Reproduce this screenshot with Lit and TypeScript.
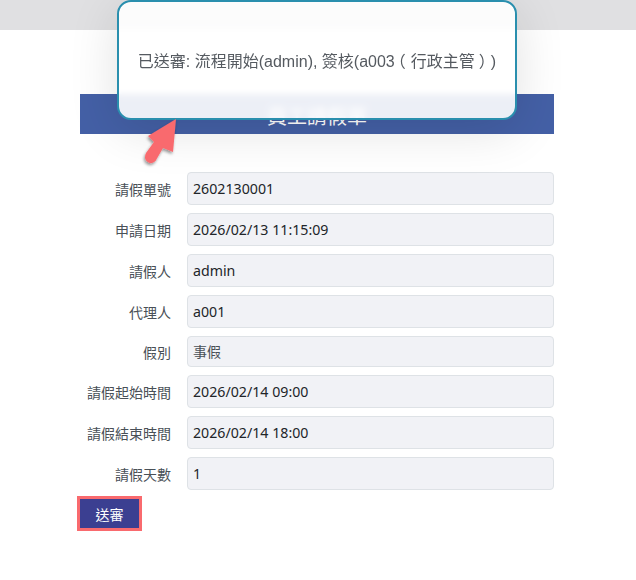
import { LitElement, html, css } from "lit";
import { customElement } from "lit/decorators.js";

const rows: [string, string, string?][] = [
  ["請假單號", "2602130001"],
  ["申請日期", "2026/02/13 11:15:09"],
  ["請假人", "admin"],
  ["代理人", "a001"],
  ["假別", "事假", "sel"],
  ["請假起始時間", "2026/02/14 09:00"],
  ["請假結束時間", "2026/02/14 18:00"],
  ["請假天數", "1"],
];

@customElement("app-root")
export class AppRoot extends LitElement {
  static styles = css`
    :host {
      display: block;
      position: relative;
      width: 636px;
      height: 580px;
      overflow: hidden;
      background: #fff;
      font-family: "Noto Sans", "Noto Sans CJK TC", sans-serif;
      color: #212529;
    }
    .top { height: 30px; background: #e0e0e2; }
    .content { padding: 64px 82px 0 80px; }
    .title {
      height: 40px;
      background: #4460a6;
      color: #fff;
      font-size: 20px;
      line-height: 46px;
      text-align: center;
      overflow: hidden;
      margin-bottom: 38px;
    }
    .form { display: flex; flex-direction: column; gap: 8px; }
    .row { display: flex; align-items: center; gap: 16px; }
    .label {
      width: 91px;
      text-align: right;
      font-size: 14px;
      color: #495057;
      white-space: nowrap;
    }
    .field {
      flex: 1;
      height: 33px;
      box-sizing: border-box;
      border: 1px solid #dee2e6;
      border-radius: 4px;
      background: #f1f2f6;
      padding: 0 5px;
      font-size: 14.2px;
      line-height: 31px;
    }
    .field.sel { height: 31px; line-height: 29px; font-size: 14px; color: #495057; }
    .btn {
      display: block;
      margin: 6px 0 0 -3px;
      width: 65px;
      height: 35px;
      box-sizing: border-box;
      border: 3px solid #f96a6e;
      background: #3b3f91;
      color: #fff;
      font: inherit;
      font-size: 14px;
      padding: 0;
    }
    .toast {
      position: absolute;
      left: 117px;
      top: 0;
      width: 400px;
      height: 120px;
      box-sizing: border-box;
      border: 2px solid #2a8fae;
      border-radius: 14px;
      background: rgba(255, 255, 255, 0.9);
      backdrop-filter: blur(3px);
      box-shadow: 0 10px 50px rgba(0, 0, 0, 0.12);
      display: flex;
      align-items: center;
      justify-content: center;
      font-family: "Liberation Sans", "Noto Sans CJK TC", sans-serif;
      font-size: 16px;
      color: #555a60;
      white-space: nowrap;
    }
    .open { font-feature-settings: "halt"; margin: 0 5px 0 3px; }
    .close { font-feature-settings: "halt"; margin: 0 4px; }
    .arrow { position: absolute; left: 140px; top: 115px; overflow: visible; }
  `;

  render() {
    return html`
      <div class="top"></div>
      <div class="content">
        <div class="title">員工請假單</div>
        <div class="form">
          ${rows.map(
            ([l, v, k]) => html`<div class="row">
              <div class="label">${l}</div>
              <div class="field ${k ?? ""}">${v}</div>
            </div>`
          )}
        </div>
        <button class="btn">送審</button>
      </div>
      <div class="toast">
        <span>已送審: 流程開始(admin), 簽核(a003<span class="open">（</span>行政主管<span class="close">）</span>)</span>
      </div>
      <svg class="arrow" width="40" height="55" viewBox="0 0 40 55">
        <defs>
          <filter id="s" x="-50%" y="-50%" width="200%" height="200%">
            <feDropShadow dx="-1" dy="2" stdDeviation="1.5" flood-color="#000" flood-opacity=".4" />
          </filter>
        </defs>
        <path
          d="M36 4 L8 21 L14 27 L6 38 Q3.5 43 7 46.5 Q11.5 50 15.5 46 L23 33 L33 37 Z"
          fill="#f96a6e"
          filter="url(#s)"
        />
      </svg>
    `;
  }
}
